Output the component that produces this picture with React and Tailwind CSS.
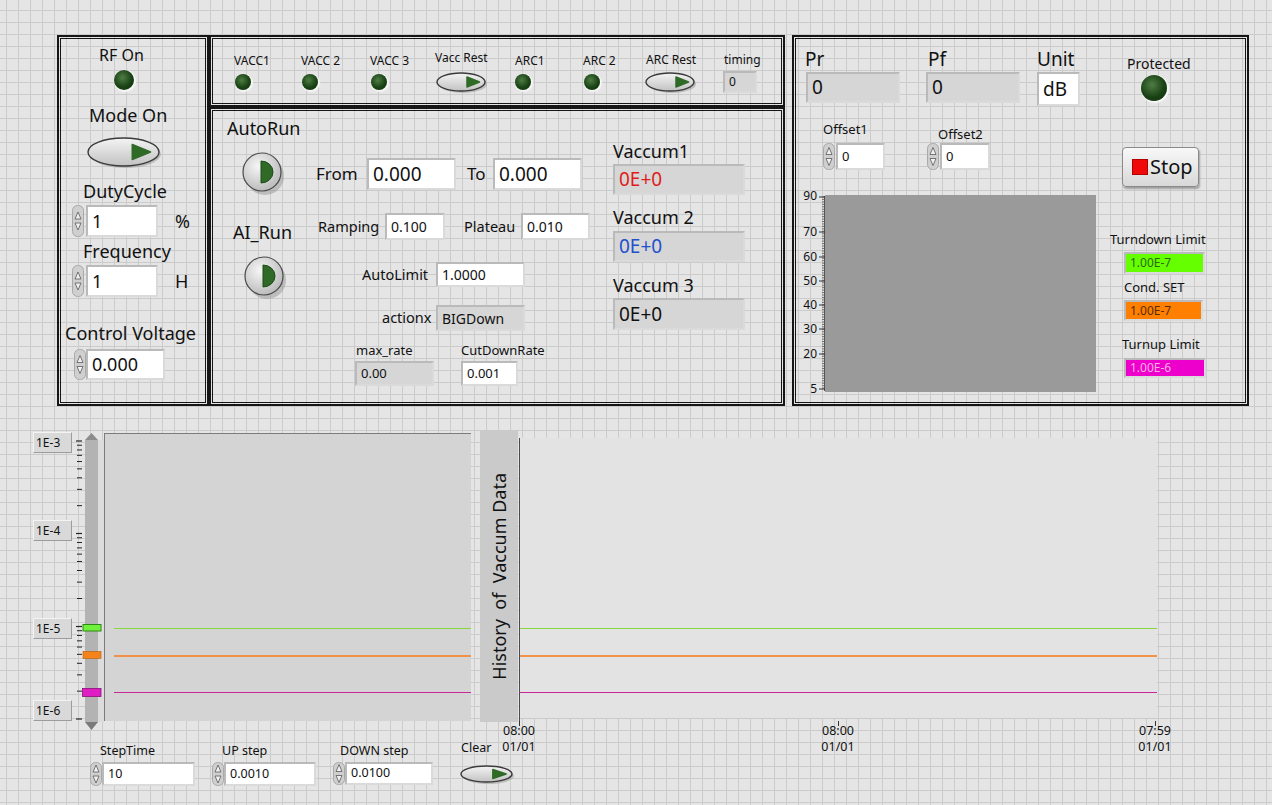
import { useId } from 'react'

const page =
  "w-[1272px] h-[805px] overflow-hidden text-[#111] font-['Noto_Sans','Open_Sans',sans-serif] bg-[#e5e5e5] bg-[linear-gradient(#cbcbcb_1px,transparent_1px),linear-gradient(90deg,#cbcbcb_1px,transparent_1px)] bg-[size:12px_12px] bg-[position:6px_10px]"

function cleanId(id) {
  return 'g' + id.replace(/[^a-zA-Z0-9]/g, '')
}

function Frame({ className = '', children }) {
  return (
    <div className={`border-2 border-[#161616] p-px ${className}`}>
      <div className="border border-[#161616] h-full">{children}</div>
    </div>
  )
}

function Led({ className = '' }) {
  return (
    <div
      className={`shrink-0 rounded-full bg-[radial-gradient(circle_at_42%_38%,#4f7d45,#1a4315_55%,#0d2b0a)] shadow-[1px_1px_1px_1px_#f6f6f6] ${className}`}
    />
  )
}

function OvalButton({ w, h, className = '' }) {
  const id = cleanId(useId())
  const cx = w / 2
  const cy = h / 2
  return (
    <svg width={w + 3} height={h + 3} className={`shrink-0 ${className}`}>
      <defs>
        <linearGradient id={id} x1="0" y1="0" x2="0" y2="1">
          <stop offset="0" stopColor="#f4f4f4" />
          <stop offset="1" stopColor="#c2c2c2" />
        </linearGradient>
      </defs>
      <ellipse cx={cx + 2} cy={cy + 2} rx={cx - 1} ry={cy - 1} fill="#9c9c9c" opacity="0.55" />
      <ellipse cx={cx} cy={cy} rx={cx - 1} ry={cy - 1} fill={`url(#${id})`} stroke="#3a3a3a" strokeWidth="1.4" />
      <path
        d={`M${w * 0.62} ${cy - h * 0.25} L${w * 0.87} ${cy} L${w * 0.62} ${cy + h * 0.25} Z`}
        fill="#2f6a27"
        stroke="#2f6a27"
        strokeWidth="1.5"
        strokeLinejoin="round"
      />
    </svg>
  )
}

function RoundButton({ className = '' }) {
  const id = cleanId(useId())
  const d = 40
  const c = d / 2
  return (
    <svg width={d + 6} height={d + 6} className={`shrink-0 ${className}`}>
      <defs>
        <radialGradient id={id} cx="0.4" cy="0.35" r="0.7">
          <stop offset="0" stopColor="#f6f6f6" />
          <stop offset="1" stopColor="#b8b8b8" />
        </radialGradient>
      </defs>
      <circle cx={c + 3} cy={c + 4} r={c - 1} fill="#8c8c8c" opacity="0.45" />
      <circle cx={c} cy={c} r={c - 1} fill={`url(#${id})`} stroke="#4a4a4a" strokeWidth="1.2" />
      <path d={`M${c - 1} ${c - 11} A 12 11 0 0 1 ${c - 1} ${c + 11} Z`} fill="#2f6a27" stroke="#1f4a1a" strokeWidth="1" />
    </svg>
  )
}

function Spinner({ h }) {
  const m = h / 2
  return (
    <svg width="12" height={h} className="shrink-0">
      <rect x="0.5" y="0.5" width="11" height={h - 1} rx="5" fill="#cfcfcf" stroke="#a9a9a9" />
      <path d={`M3 ${m - 2} L6 ${m - 9} L9 ${m - 2} Z`} fill="#f1f1f1" stroke="#666" strokeWidth="0.9" />
      <path d={`M3 ${m + 2} L6 ${m + 9} L9 ${m + 2} Z`} fill="#f1f1f1" stroke="#666" strokeWidth="0.9" />
    </svg>
  )
}

function Box({ gray, className = '', children }) {
  return (
    <div
      className={`shrink-0 flex items-center pl-[4px] border-2 border-[#dadada] border-t-[#bababa] border-l-[#bababa] ${gray ? 'bg-[#d6d6d6]' : 'bg-white'} ${className}`}
    >
      {children}
    </div>
  )
}

function LeftPanel() {
  return (
    <div className="flex flex-col items-start">
      <div className="mt-[6px] ml-[38px] h-[20px] leading-[20px] text-[16px]">RF On</div>
      <Led className="mt-[5px] ml-[53px] w-[20px] h-[20px]" />
      <div className="mt-[14px] ml-[28px] h-[22px] leading-[22px] text-[18px]">Mode On</div>
      <OvalButton w={73} h={30} className="mt-[11px] ml-[26px]" />
      <div className="mt-[10px] ml-[22px] h-[22px] leading-[22px] text-[18px]">DutyCycle</div>
      <div className="mt-[3px] ml-[11px] flex items-center">
        <Spinner h={32} />
        <Box className="ml-[2px] w-[72px] h-[32px] text-[18px]">1</Box>
        <span className="ml-[17px] text-[18px]">%</span>
      </div>
      <div className="mt-[3px] ml-[22px] h-[22px] leading-[22px] text-[18px]">Frequency</div>
      <div className="mt-[3px] ml-[11px] flex items-center">
        <Spinner h={32} />
        <Box className="ml-[2px] w-[72px] h-[32px] text-[18px]">1</Box>
        <span className="ml-[17px] text-[18px]">H</span>
      </div>
      <div className="mt-[25px] ml-[4px] h-[22px] leading-[22px] text-[18px] whitespace-nowrap">Control Voltage</div>
      <div className="mt-[5px] ml-[13px] flex items-center">
        <Spinner h={31} />
        <Box className="w-[79px] h-[31px] text-[18px]">0.000</Box>
      </div>
    </div>
  )
}

function LedCol({ label, w, ledMl = 'ml-px' }) {
  return (
    <div className={`flex flex-col items-start ${w}`}>
      <div className="mt-[15px] h-[14px] leading-[14px] text-[12px] whitespace-nowrap">{label}</div>
      <Led className={`mt-[6px] w-[16px] h-[16px] ${ledMl}`} />
    </div>
  )
}

function Strip() {
  return (
    <div className="flex pl-[21px]">
      <LedCol label="VACC1" w="w-[67px]" />
      <LedCol label="VACC 2" w="w-[69px]" />
      <LedCol label="VACC 3" w="w-[65px]" />
      <div className="flex flex-col items-start w-[80px]">
        <div className="mt-[12px] h-[14px] leading-[14px] text-[12px] whitespace-nowrap">Vacc Rest</div>
        <OvalButton w={50} h={20} className="mt-[7px] ml-px" />
      </div>
      <LedCol label="ARC1" w="w-[68px]" ledMl="ml-0" />
      <LedCol label="ARC 2" w="w-[62px]" />
      <div className="flex flex-col items-start w-[78px]">
        <div className="mt-[14px] ml-px h-[14px] leading-[14px] text-[12px] whitespace-nowrap">ARC Rest</div>
        <OvalButton w={50} h={20} className="mt-[5px]" />
      </div>
      <div className="flex flex-col items-start">
        <div className="mt-[14px] ml-px h-[14px] leading-[14px] text-[12px]">timing</div>
        <Box gray className="mt-[4px] w-[34px] h-[22px] text-[12px]">0</Box>
      </div>
    </div>
  )
}

function Middle() {
  return (
    <div className="flex pl-[14px]">
      <div className="w-[89px] flex flex-col items-start">
        <div className="mt-[6px] h-[22px] leading-[22px] text-[18px]">AutoRun</div>
        <RoundButton className="mt-[13px] ml-[15px]" />
        <div className="mt-[23px] ml-[6px] h-[22px] leading-[22px] text-[18px]">AI_Run</div>
        <RoundButton className="mt-[13px] ml-[17px]" />
      </div>

      <div className="w-[297px] flex flex-col items-start">
        <div className="mt-[47px] h-[32px] flex items-center">
          <span className="w-[51px] text-[17px]">From</span>
          <Box className="w-[89px] h-[32px] text-[19px]">0.000</Box>
          <span className="ml-[11px] w-[26px] text-[17px]">To</span>
          <Box className="w-[89px] h-[32px] text-[19px]">0.000</Box>
        </div>
        <div className="mt-[23px] ml-[2px] h-[27px] flex items-center">
          <span className="w-[67px] text-[14.5px]">Ramping</span>
          <Box className="w-[60px] h-[27px] text-[14px]">0.100</Box>
          <span className="ml-[19px] w-[57px] text-[14.5px]">Plateau</span>
          <Box className="w-[69px] h-[27px] text-[14px]">0.010</Box>
        </div>
        <div className="mt-[22px] ml-[46px] h-[25px] flex items-center">
          <span className="w-[74px] text-[14.5px]">AutoLimit</span>
          <Box className="w-[89px] h-[25px] text-[14px]">1.0000</Box>
        </div>
        <div className="mt-[18px] ml-[66px] h-[26px] flex items-center">
          <span className="w-[54px] text-[14.5px]">actionx</span>
          <Box gray className="w-[89px] h-[26px] text-[14px]">BIGDown</Box>
        </div>
        <div className="mt-[11px] flex items-start">
          <div className="ml-[39px] flex flex-col items-start">
            <div className="ml-px h-[16px] leading-[16px] text-[13px]">max_rate</div>
            <Box gray className="mt-[3px] w-[79px] h-[25px] text-[13px]">0.00</Box>
          </div>
          <div className="ml-[27px] flex flex-col items-start">
            <div className="h-[16px] leading-[16px] text-[13px]">CutDownRate</div>
            <Box className="mt-[3px] w-[57px] h-[25px] text-[13px]">0.001</Box>
          </div>
        </div>
      </div>

      <div className="flex flex-col items-start">
        <div className="mt-[29px] h-[22px] leading-[22px] text-[18px]">Vaccum1</div>
        <Box gray className="mt-[2px] w-[132px] h-[31px] text-[19px] text-[#e01c1c]">0E+0</Box>
        <div className="mt-[11px] h-[22px] leading-[22px] text-[18px]">Vaccum 2</div>
        <Box gray className="mt-[3px] w-[132px] h-[31px] text-[19px] text-[#2150cc]">0E+0</Box>
        <div className="mt-[12px] h-[22px] leading-[22px] text-[18px]">Vaccum 3</div>
        <Box gray className="mt-[2px] w-[132px] h-[32px] text-[19px]">0E+0</Box>
      </div>
    </div>
  )
}

const gaugeLabels = [
  { t: '90', cls: 'top-[-6px]', y: 2 },
  { t: '70', cls: 'top-[30px]', y: 37 },
  { t: '60', cls: 'top-[55px]', y: 62 },
  { t: '50', cls: 'top-[79px]', y: 86 },
  { t: '40', cls: 'top-[103px]', y: 110 },
  { t: '30', cls: 'top-[127px]', y: 134 },
  { t: '20', cls: 'top-[152px]', y: 159 },
  { t: '5', cls: 'top-[187px]', y: 194 },
]

function PowerChart() {
  const minor = []
  for (let y = 2; y <= 195; y += 2.45) minor.push(y)
  return (
    <div className="mt-[25px] flex">
      <div className="relative w-[29px] h-[197px]">
        {gaugeLabels.map(l => (
          <div key={l.t} className={`absolute right-[8px] h-[14px] leading-[14px] text-[12px] ${l.cls}`}>{l.t}</div>
        ))}
        <svg className="absolute left-[22px] top-0" width="7" height="197">
          <line x1="6.5" y1="1" x2="6.5" y2="196" stroke="#555" strokeWidth="1" />
          {minor.map((y, i) => (
            <line key={i} x1="4" y1={y} x2="7" y2={y} stroke="#555" strokeWidth="0.8" />
          ))}
          {gaugeLabels.map(l => (
            <line key={l.t} x1="1" y1={l.y} x2="7" y2={l.y} stroke="#333" strokeWidth="1" />
          ))}
        </svg>
      </div>
      <div className="w-[271px] h-[197px] bg-[#9a9a9a]" />
    </div>
  )
}

function RightPanel() {
  return (
    <div className="flex flex-col">
      <div className="flex items-start pl-[10px]">
        <div className="w-[120px] flex flex-col items-start">
          <div className="mt-[9px] -ml-px h-[22px] leading-[22px] text-[19px]">Pr</div>
          <Box gray className="mt-[2px] w-[94px] h-[31px] text-[19px]">0</Box>
        </div>
        <div className="w-[111px] flex flex-col items-start">
          <div className="mt-[9px] ml-[2px] h-[22px] leading-[22px] text-[19px]">Pf</div>
          <Box gray className="mt-[2px] w-[94px] h-[31px] text-[19px]">0</Box>
        </div>
        <div className="w-[90px] flex flex-col items-start">
          <div className="mt-[9px] h-[22px] leading-[22px] text-[19px]">Unit</div>
          <Box className="mt-[2px] w-[43px] h-[34px] text-[19px]">dB</Box>
        </div>
        <div className="flex flex-col items-start">
          <div className="mt-[17px] h-[16px] leading-[16px] text-[14px]">Protected</div>
          <Led className="mt-[3px] ml-[14px] w-[26px] h-[26px]" />
        </div>
      </div>

      <div className="flex">
        <div className="w-[314px] flex flex-col items-start">
          <div className="mt-[15px] flex items-end">
            <div className="ml-[27px] flex flex-col items-start">
              <div className="h-[16px] leading-[16px] text-[13px]">Offset1</div>
              <div className="mt-[6px] flex">
                <Spinner h={27} />
                <Box className="ml-px w-[49px] h-[27px] text-[13px]">0</Box>
              </div>
            </div>
            <div className="ml-[42px] flex flex-col items-start">
              <div className="ml-[11px] h-[16px] leading-[16px] text-[13px]">Offset2</div>
              <div className="mt-px flex">
                <Spinner h={27} />
                <Box className="ml-px w-[50px] h-[27px] text-[13px]">0</Box>
              </div>
            </div>
          </div>
          <PowerChart />
        </div>

        <div className="flex flex-col items-start">
          <div className="mt-[41px] ml-[12px] w-[77px] h-[40px] rounded-[4px] border border-[#8a8a8a] bg-[linear-gradient(#f8f8f8,#d8d8d8)] shadow-[1px_2px_2px_#a0a0a0] flex items-center pl-[9px] gap-[2px]">
            <span className="w-[16px] h-[16px] bg-[#ee0a0a] border border-[#b00000]" />
            <span className="text-[20px] leading-none">Stop</span>
          </div>
          <div className="mt-[44px] h-[16px] leading-[16px] text-[13px] whitespace-nowrap">Turndown Limit</div>
          <Box className="mt-[5px] ml-[14px] w-[81px] h-[22px] text-[12px] !bg-[#66ff00] text-[#2b6a10]">1.00E-7</Box>
          <div className="mt-[5px] ml-[14px] h-[16px] leading-[16px] text-[13px]">Cond. SET</div>
          <Box className="mt-[5px] ml-[14px] w-[79px] h-[21px] text-[12px] !bg-[#ff8000] text-[#5a2c00]">1.00E-7</Box>
          <div className="mt-[15px] ml-[12px] h-[16px] leading-[16px] text-[13px]">Turnup Limit</div>
          <Box className="mt-[6px] ml-[14px] w-[82px] h-[20px] text-[12px] !bg-[#ee00cc] text-[#ffb0e0]">1.00E-6</Box>
        </div>
      </div>
    </div>
  )
}

const scaleLabels = [
  { t: '1E-3', cls: 'top-[2px]' },
  { t: '1E-4', cls: 'top-[90px]' },
  { t: '1E-5', cls: 'top-[188px]' },
  { t: '1E-6', cls: 'top-[270px]' },
]

function Scale() {
  const decades = [11, 103.5, 196.5, 289]
  const ticks = []
  for (let i = 0; i < 3; i++) {
    const top = decades[i]
    const bottom = decades[i + 1]
    for (let k = 2; k <= 9; k++) ticks.push(bottom - (bottom - top) * Math.log10(k))
  }
  return (
    <div className="relative w-[71px] h-[302px] shrink-0">
      {scaleLabels.map(l => (
        <div
          key={l.t}
          className={`absolute left-0 w-[39px] h-[21px] bg-[#d9d9d9] border border-[#f3f3f3] border-r-[#9c9c9c] border-b-[#9c9c9c] text-[12px] leading-[19px] pl-[2px] ${l.cls}`}
        >
          {l.t}
        </div>
      ))}
      <svg className="absolute left-[43px] top-0" width="28" height="302">
        {decades.map(y => (
          <line key={y} x1="0" y1={y} x2="6" y2={y} stroke="#222" strokeWidth="1.2" />
        ))}
        {ticks.map((y, i) => (
          <line key={i} x1="1" y1={y} x2="6" y2={y} stroke="#222" strokeWidth="1" />
        ))}
        <rect x="9" y="10" width="13" height="282" fill="#b3b3b3" />
        <rect x="22" y="10" width="6" height="282" fill="#dcdcdc" />
        <path d="M9 10 L15.5 3 L22 10 Z" fill="#8d8d8d" />
        <path d="M9 292 L15.5 300 L22 292 Z" fill="#7a7a7a" />
        <rect x="7" y="194.5" width="18" height="6.5" fill="#6ef03c" stroke="#2e8a12" />
        <rect x="7" y="221.5" width="18" height="7" fill="#f4841a" stroke="#b85a08" strokeWidth="0.6" />
        <rect x="6.5" y="258.5" width="18.5" height="8" fill="#e01cc4" stroke="#8c1078" strokeWidth="0.8" />
      </svg>
    </div>
  )
}

function Lines({ offsets }) {
  return (
    <>
      <div className={`absolute right-0 h-px bg-[#86d83c] ${offsets[0]}`} />
      <div className={`absolute right-0 h-[2px] bg-[#f2924a] ${offsets[1]}`} />
      <div className={`absolute right-0 h-px bg-[#c8289a] ${offsets[2]}`} />
    </>
  )
}

const timeTicks = [
  { t: '08:00', cls: 'left-[-25px]', x: 0.5 },
  { t: '08:00', cls: 'left-[294px]', x: 319.5 },
  { t: '07:59', cls: 'left-[611px]', x: 636.5 },
]

function HistoryChart() {
  return (
    <div className="w-[660px]">
      <div className="relative mt-[8px] ml-px w-[638px] h-[280px] bg-[#e3e3e3] border-l border-[#4a4a4a]">
        <Lines offsets={['left-0 top-[190px]', 'left-0 top-[217px]', 'left-0 top-[254px]']} />
      </div>
      <div className="relative ml-px h-[40px]">
        <svg className="absolute left-0 top-0" width="640" height="10">
          <line x1="0.5" y1="0" x2="0.5" y2="4" stroke="#4a4a4a" />
          {timeTicks.map(t => (
            <line key={t.x} x1={t.x} y1="3" x2={t.x} y2="8" stroke="#333" />
          ))}
        </svg>
        {timeTicks.map(t => (
          <div key={t.x} className={`absolute top-[5px] w-[50px] text-center text-[12.5px] leading-[16px] ${t.cls}`}>
            <div>{t.t}</div>
            <div>01/01</div>
          </div>
        ))}
      </div>
    </div>
  )
}

function StepField({ label, value, w, labelMl, boxW, h }) {
  return (
    <div className={`mt-[3px] ${w}`}>
      <div className={`h-[16px] leading-[16px] text-[12.5px] ${labelMl}`}>{label}</div>
      <div className="mt-[3px] flex">
        <Spinner h={h} />
        <Box className={`${boxW} ${h === 23 ? 'h-[23px]' : 'h-[24px]'} text-[12.5px]`}>{value}</Box>
      </div>
    </div>
  )
}

export default function App() {
  return (
    <div className={page}>
      <div className="flex pt-[35px] pl-[57px] h-[406px]">
        <Frame className="w-[152px] h-[371px]">
          <LeftPanel />
        </Frame>
        <div className="flex flex-col w-[576px]">
          <Frame className="h-[72px]">
            <Strip />
          </Frame>
          <Frame className="h-[299px]">
            <Middle />
          </Frame>
        </div>
        <Frame className="ml-[7px] w-[457px] h-[371px]">
          <RightPanel />
        </Frame>
      </div>

      <div className="flex mt-[24px] pl-[33px]">
        <div className="flex flex-col w-[485px]">
          <div className="flex h-[302px] items-start">
            <Scale />
            <div className="relative mt-[3px] w-[367px] h-[288px] bg-[#d4d4d4] border-t border-l border-[#7b7b7b] shrink-0">
              <Lines offsets={['left-[9px] top-[194px]', 'left-[9px] top-[221px]', 'left-[9px] top-[258px]']} />
            </div>
            <div className="ml-[9px] w-[38px] h-[292px] bg-[#cacaca] flex items-center justify-center shrink-0">
              <span className="[writing-mode:vertical-rl] rotate-180 text-[18px] whitespace-nowrap">History&nbsp; of&nbsp; Vaccum Data</span>
            </div>
          </div>
          <div className="flex items-start mt-[8px] pl-[57px]">
            <StepField label="StepTime" value="10" w="w-[122px]" labelMl="ml-[10px]" boxW="w-[93px]" h={24} />
            <StepField label="UP step" value="0.0010" w="w-[121px]" labelMl="ml-[10px]" boxW="w-[92px]" h={24} />
            <StepField label="DOWN step" value="0.0100" w="w-[127px]" labelMl="ml-[7px]" boxW="w-[88px]" h={23} />
            <div className="flex flex-col items-start">
              <div className="ml-px h-[16px] leading-[16px] text-[12.5px]">Clear</div>
              <OvalButton w={53} h={18} className="mt-[9px]" />
            </div>
          </div>
        </div>
        <HistoryChart />
      </div>
    </div>
  )
}
